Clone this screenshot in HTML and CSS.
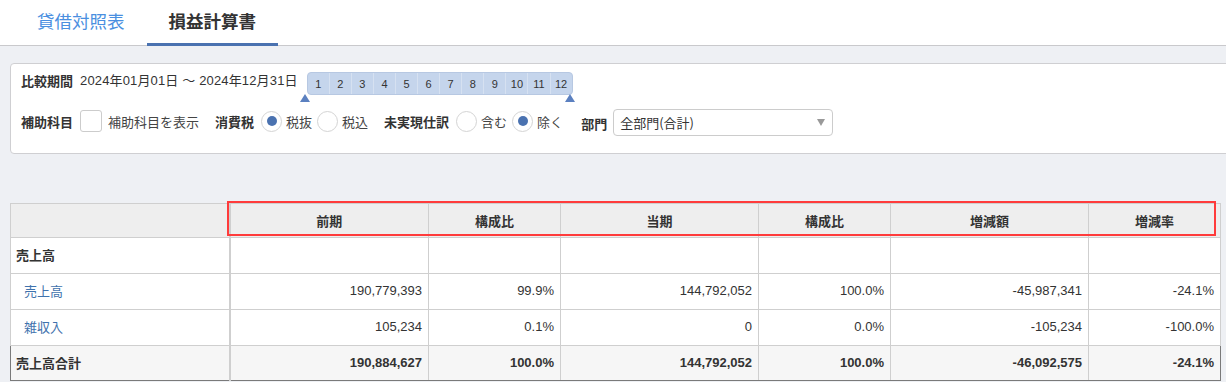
FILE: index.html
```html
<!DOCTYPE html>
<html lang="ja">
<head>
<meta charset="utf-8">
<link rel="stylesheet" href="styles.css">
</head>
<body>
<div class="tabs">
  <a class="tab">貸借対照表</a>
  <a class="tab active">損益計算書</a>
</div>

<div class="panel">
  <div class="prow prow1">
    <span class="lbl">比較期間</span>
    <span class="period">2024年01月01日 ～ 2024年12月31日</span>
    <div class="months">
      <div class="mbar">
        <span>1</span><span>2</span><span>3</span><span>4</span><span>5</span><span>6</span><span>7</span><span>8</span><span>9</span><span>10</span><span>11</span><span>12</span>
      </div>
      <span class="handle hl"></span>
      <span class="handle hr"></span>
    </div>
  </div>
  <div class="prow prow2">
    <span class="lbl">補助科目</span>
    <span class="check"></span>
    <span class="opt">補助科目を表示</span>
    <span class="lbl lbl-gap">消費税</span>
    <span class="radio on"></span><span class="opt">税抜</span>
    <span class="radio"></span><span class="opt">税込</span>
    <span class="lbl lbl-gap">未実現仕訳</span>
    <span class="radio"></span><span class="opt">含む</span>
    <span class="radio on"></span><span class="opt">除く</span>
    <span class="lbl lbl-dept">部門</span>
    <div class="select"><span>全部門(合計)</span><span class="caret"></span></div>
  </div>
</div>

<div class="tablewrap">
  <table class="pl">
    <colgroup>
      <col class="c0"><col class="c1"><col class="c2"><col class="c3"><col class="c4"><col class="c5"><col class="c6">
    </colgroup>
    <thead>
      <tr><th></th><th>前期</th><th>構成比</th><th>当期</th><th>構成比</th><th>増減額</th><th>増減率</th></tr>
    </thead>
    <tbody>
      <tr class="grp"><td class="name">売上高</td><td></td><td></td><td></td><td></td><td></td><td></td></tr>
      <tr><td class="name sub">売上高</td><td>190,779,393</td><td>99.9%</td><td>144,792,052</td><td>100.0%</td><td>-45,987,341</td><td>-24.1%</td></tr>
      <tr><td class="name sub">雑収入</td><td>105,234</td><td>0.1%</td><td>0</td><td>0.0%</td><td>-105,234</td><td>-100.0%</td></tr>
      <tr class="total"><td class="name">売上高合計</td><td>190,884,627</td><td>100.0%</td><td>144,792,052</td><td>100.0%</td><td>-46,092,575</td><td>-24.1%</td></tr>
    </tbody>
  </table>
  <div class="highlight"></div>
</div>
</body>
</html>
```

FILE: styles.css
```css
* { box-sizing: border-box; }
html, body { margin: 0; padding: 0; }
body {
  background: #eef0f4;
  font-family: "Liberation Sans", "Noto Sans CJK JP", sans-serif;
  color: #333;
  width: 1226px;
  height: 382px;
  overflow: hidden;
}

/* tabs */
.tabs {
  background: #fff;
  height: 46px;
  border-bottom: 1px solid #c9c9cc;
  display: flex;
  padding-left: 16px;
}
.tab {
  display: flex;
  align-items: center;
  height: 46px;
  padding: 0 22px 5px;
  font-size: 17.5px;
  color: #4a8fe0;
  font-family: "Noto Sans CJK JP", sans-serif;
  line-height: 1;
}
.tab:first-child { padding-left: 21px; }
.tab.active {
  color: #333;
  font-weight: bold;
  border-bottom: 3px solid #4a72b0;
  padding-bottom: 2px;
}

/* filter panel */
.panel {
  margin: 17px 0 0 10px;
  width: 1230px;
  height: 91px;
  background: #fff;
  border: 1px solid #cfcfd2;
  border-radius: 4px;
  padding: 0 10px;
  font-size: 13px;
  font-family: "Noto Sans CJK JP", sans-serif;
}
.prow { display: flex; align-items: center; }
.prow1 { height: 34px; padding-top: 8px; align-items: flex-start; }
.prow1 .lbl, .prow1 .period { line-height: 16px; margin-top: 1px; }
.prow2 { height: 46px; }
.lbl { font-weight: bold; color: #333; margin-right: 7px; white-space: nowrap; }
.lbl-gap { margin-left: 11px; }
.lbl-dept { margin-left: 13px; margin-top: 4px; margin-right: 6px; }
.period { font-family: "Liberation Sans", "Noto Sans CJK JP", sans-serif; font-size: 13px; letter-spacing: 0.15px; }

.months { position: relative; margin-left: 9px; }
.mbar {
  display: flex;
  background: #c5d5ec;
  border: 1px solid #b7c8e2;
  border-radius: 4px;
  height: 23px;
  width: 266px;
}
.mbar span {
  flex: 1;
  display: flex;
  align-items: center;
  justify-content: center;
  font-size: 11px;
  color: #333;
  font-family: "Liberation Sans", sans-serif;
  border-left: 1px solid #d6e1f1;
}
.mbar span:first-child { border-left: none; }
.handle {
  position: absolute;
  top: 22px;
  width: 0; height: 0;
  border-left: 5px solid transparent;
  border-right: 5px solid transparent;
  border-bottom: 8px solid #5b80c0;
}
.hl { left: -7px; }
.hr { left: 258px; }

.check {
  width: 22px; height: 22px;
  border: 1px solid #ccc;
  border-radius: 3px;
  margin-right: 6px;
}
.opt { margin-right: 5px; color: #444; white-space: nowrap; }
.radio {
  width: 21px; height: 21px;
  border: 1px solid #d4d4d4;
  border-radius: 50%;
  margin-right: 4px;
  display: flex; align-items: center; justify-content: center;
  background: #fff;
}
.radio.on::after {
  content: "";
  width: 10px; height: 10px;
  border-radius: 50%;
  background: #4a72b0;
}
.select {
  width: 220px; height: 27px;
  border: 1px solid #ccc;
  border-radius: 4px;
  display: flex; align-items: center; justify-content: space-between;
  padding: 0 7px 0 6px;
  margin-top: 3px;
  font-size: 13px;
}
.caret {
  width: 0; height: 0;
  border-left: 4px solid transparent;
  border-right: 4px solid transparent;
  border-top: 7px solid #999;
}

/* table */
.tablewrap { position: relative; margin: 49px 0 0 10px; }
.pl {
  border-collapse: collapse;
  table-layout: fixed;
  width: 1210px;
  font-size: 13px;
  font-family: "Liberation Sans", "Noto Sans CJK JP", sans-serif;
  background: #fff;
}
.c0 { width: 219px; }
.c1 { width: 199px; }
.c2 { width: 132px; }
.c3 { width: 198px; }
.c4 { width: 132px; }
.c5 { width: 198px; }
.c6 { width: 132px; }
.pl th, .pl td { border: 1px solid #cfcfcf; }
.pl th {
  background: #eeeeee;
  height: 34px;
  font-weight: bold;
  text-align: center;
  color: #333;
}
.pl td {
  height: 36px;
  text-align: right;
  padding: 0 6px 2px;
  color: #333;
}
.pl td:first-child, .pl th:first-child { border-right: 2px solid #cfcfcf; }
.pl td.name { text-align: left; padding-left: 5px; font-weight: bold; }
.pl td.sub { font-weight: normal; color: #3f72ad; padding-left: 13px; }
.pl tr.total td {
  background: #f6f6f6;
  font-weight: bold;
  border-top: 1px solid #7a7a7a;
  border-bottom: 1px solid #7a7a7a;
  height: 35px;
}
.pl tr.total td:first-child { border-left: 1px solid #7a7a7a; }
.pl tr.total td:last-child { border-right: 1px solid #7a7a7a; }

.highlight {
  position: absolute;
  left: 217px;
  top: -2px;
  width: 989px;
  height: 35px;
  border: 2px solid #ff3b3b;
  pointer-events: none;
}
```
